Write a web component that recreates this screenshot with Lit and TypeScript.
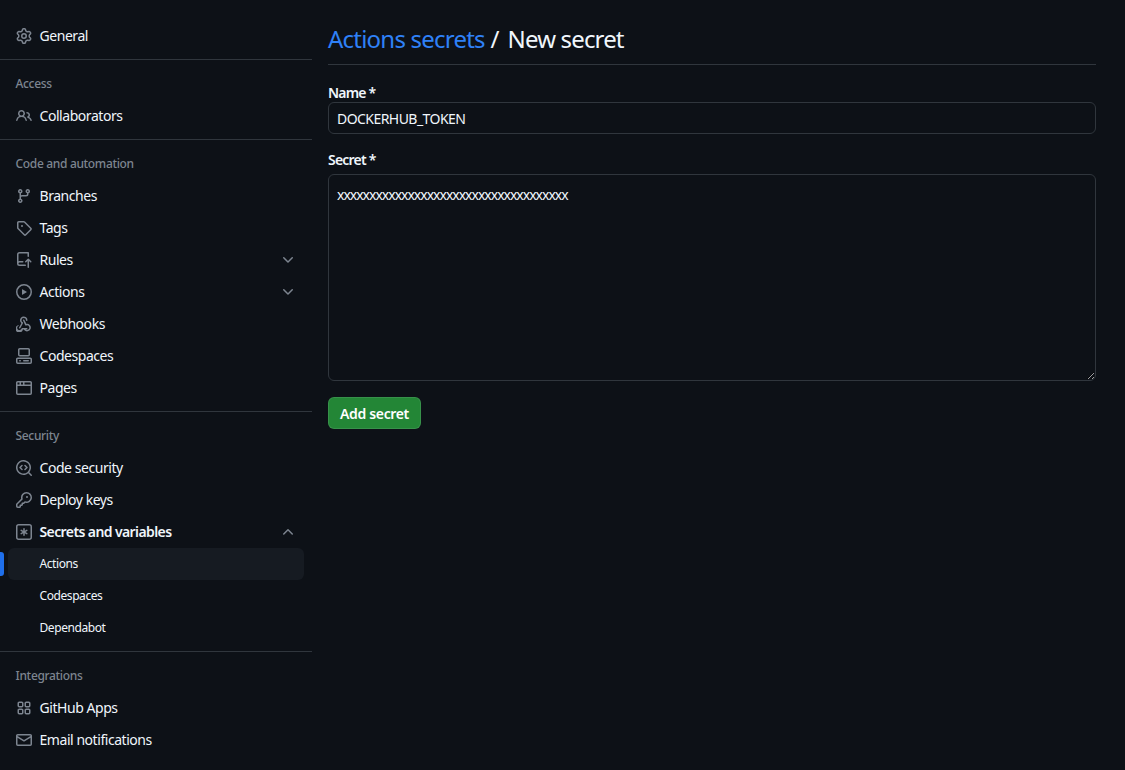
import { LitElement, html, css, svg } from "lit";
import { customElement } from "lit/decorators.js";

const I: Record<string, string> = {
  gear: "M8 0a8.2 8.2 0 0 1 .701.031C9.444.095 9.99.645 10.16 1.29l.288 1.107c.018.066.079.158.212.224.231.114.454.243.668.386.123.082.233.09.299.071l1.103-.303c.644-.176 1.392.021 1.82.63.27.385.506.792.704 1.218.315.675.111 1.422-.364 1.891l-.814.806c-.049.048-.098.147-.088.294.016.257.016.515 0 .772-.01.147.038.246.088.294l.814.806c.475.469.679 1.216.364 1.891a7.977 7.977 0 0 1-.704 1.217c-.428.61-1.176.807-1.82.63l-1.102-.302c-.067-.019-.177-.011-.3.071a5.909 5.909 0 0 1-.668.386c-.133.066-.194.158-.211.224l-.29 1.106c-.168.646-.715 1.196-1.458 1.26a8.006 8.006 0 0 1-1.402 0c-.743-.064-1.289-.614-1.458-1.26l-.289-1.106c-.018-.066-.079-.158-.212-.224a5.738 5.738 0 0 1-.668-.386c-.123-.082-.233-.09-.299-.071l-1.103.303c-.644.176-1.392-.021-1.82-.63a8.12 8.12 0 0 1-.704-1.218c-.315-.675-.111-1.422.363-1.891l.815-.806c.05-.048.098-.147.088-.294a6.214 6.214 0 0 1 0-.772c.01-.147-.038-.246-.088-.294l-.815-.806C.635 6.045.431 5.298.746 4.623a7.92 7.92 0 0 1 .704-1.217c.428-.61 1.176-.807 1.82-.63l1.102.302c.067.019.177.011.3-.071.214-.143.437-.272.668-.386.133-.066.194-.158.211-.224l.29-1.106C6.009.645 6.556.095 7.299.03 7.53.01 7.764 0 8 0Zm-.571 1.525c-.036.003-.108.036-.137.146l-.289 1.105c-.147.561-.549.967-.998 1.189-.173.086-.34.183-.5.29-.417.278-.97.423-1.529.27l-1.103-.303c-.109-.03-.175.016-.195.045-.22.312-.412.644-.573.99-.014.031-.021.11.059.19l.815.806c.411.406.562.957.53 1.456a4.709 4.709 0 0 0 0 .582c.032.499-.119 1.05-.53 1.456l-.815.806c-.081.08-.073.159-.059.19.162.346.353.677.573.989.02.03.085.076.195.046l1.102-.303c.56-.153 1.113-.008 1.53.27.161.107.328.204.501.29.447.222.85.629.997 1.189l.289 1.105c.029.109.101.143.137.146a6.6 6.6 0 0 0 1.142 0c.036-.003.108-.036.137-.146l.289-1.105c.147-.561.549-.967.998-1.189.173-.086.34-.183.5-.29.417-.278.97-.423 1.529-.27l1.103.303c.109.029.175-.016.195-.045.22-.313.411-.644.573-.99.014-.031.021-.11-.059-.19l-.815-.806c-.411-.406-.562-.957-.53-1.456a4.709 4.709 0 0 0 0-.582c-.032-.499.119-1.05.53-1.456l.815-.806c.081-.08.073-.159.059-.19a6.464 6.464 0 0 0-.573-.989c-.02-.03-.085-.076-.195-.046l-1.102.303c-.56.153-1.113.008-1.53-.27a4.44 4.44 0 0 0-.501-.29c-.447-.222-.85-.629-.997-1.189l-.289-1.105c-.029-.11-.101-.143-.137-.146a6.6 6.6 0 0 0-1.142 0ZM11 8a3 3 0 1 1-6 0 3 3 0 0 1 6 0ZM9.5 8a1.5 1.5 0 1 0-3.001.001A1.5 1.5 0 0 0 9.5 8Z",
  people: "M2 5.5a3.5 3.5 0 1 1 5.898 2.549 5.508 5.508 0 0 1 3.034 4.084.75.75 0 1 1-1.482.235 4 4 0 0 0-7.9 0 .75.75 0 0 1-1.482-.236A5.507 5.507 0 0 1 3.102 8.05 3.493 3.493 0 0 1 2 5.5ZM11 4a3.001 3.001 0 0 1 2.22 5.018 5.01 5.01 0 0 1 2.56 3.012.749.749 0 0 1-.885.954.752.752 0 0 1-.549-.514 3.507 3.507 0 0 0-2.522-2.372.75.75 0 0 1-.574-.73v-.352a.75.75 0 0 1 .416-.672A1.5 1.5 0 0 0 11 5.5.75.75 0 0 1 11 4Zm-5.5-.5a2 2 0 1 0-.001 3.999A2 2 0 0 0 5.5 3.5Z",
  branch: "M9.5 3.25a2.25 2.25 0 1 1 3 2.122V6A2.5 2.5 0 0 1 10 8.5H6a1 1 0 0 0-1 1v1.128a2.251 2.251 0 1 1-1.5 0V5.372a2.25 2.25 0 1 1 1.5 0v1.836A2.493 2.493 0 0 1 6 7h4a1 1 0 0 0 1-1v-.628A2.25 2.25 0 0 1 9.5 3.25Zm-6 0a.75.75 0 1 0 1.5 0 .75.75 0 0 0-1.5 0Zm8.25-.75a.75.75 0 1 0 0 1.5.75.75 0 0 0 0-1.5ZM4.25 12a.75.75 0 1 0 0 1.5.75.75 0 0 0 0-1.5Z",
  tag: "M1 7.775V2.75C1 1.784 1.784 1 2.75 1h5.025c.464 0 .91.184 1.238.513l6.25 6.25a1.75 1.75 0 0 1 0 2.474l-5.026 5.026a1.75 1.75 0 0 1-2.474 0l-6.25-6.25A1.752 1.752 0 0 1 1 7.775Zm1.5 0c0 .066.026.13.073.177l6.25 6.25a.25.25 0 0 0 .354 0l5.025-5.025a.25.25 0 0 0 0-.354l-6.25-6.25a.25.25 0 0 0-.177-.073H2.75a.25.25 0 0 0-.25.25ZM6 5a1 1 0 1 1 0 2 1 1 0 0 1 0-2Z",
  rules: "M1 2.5A2.5 2.5 0 0 1 3.5 0h8.75a.75.75 0 0 1 .75.75v3.5a.75.75 0 0 1-1.5 0V1.5h-8a1 1 0 0 0-1 1v6.708A2.493 2.493 0 0 1 3.5 9h3.25a.75.75 0 0 1 0 1.5H3.5a1 1 0 0 0 0 2h5.75a.75.75 0 0 1 0 1.5H3.5A2.5 2.5 0 0 1 1 11.5Zm13.23 7.79h-.001l-1.224-1.224v6.184a.75.75 0 0 1-1.5 0V9.066L10.28 10.29a.75.75 0 0 1-1.06-1.061l2.505-2.504a.75.75 0 0 1 1.06 0L15.29 9.23a.751.751 0 0 1-.018 1.042.751.751 0 0 1-1.042.018Z",
  play: "M8 0a8 8 0 1 1 0 16A8 8 0 0 1 8 0ZM1.5 8a6.5 6.5 0 1 0 13 0 6.5 6.5 0 0 0-13 0Zm4.879-2.773 4.264 2.559a.25.25 0 0 1 0 .428l-4.264 2.559A.25.25 0 0 1 6 10.559V5.442a.25.25 0 0 1 .379-.215Z",
  webhook: "M5.5 4.25a2.25 2.25 0 0 1 4.5 0 .75.75 0 0 0 1.5 0 3.75 3.75 0 1 0-6.14 2.889l-2.272 4.258a.75.75 0 0 0 1.324.706L7 7.25a.75.75 0 0 0-.309-1.015A2.25 2.25 0 0 1 5.5 4.25Z M7.364 3.607a.75.75 0 0 1 1.012.317l2.132 3.996a3.75 3.75 0 1 1-2.352 6.079.75.75 0 0 1 1.13-.987 2.25 2.25 0 1 0 .862-3.495.75.75 0 0 1-.966-.33L7.05 4.62a.75.75 0 0 1 .314-1.013Z M2.9 8.853a.75.75 0 0 1-.45.961A2.25 2.25 0 1 0 5.5 12.75a.75.75 0 0 1 .75-.75h4.5a.75.75 0 0 1 0 1.5H6.922a3.75 3.75 0 1 1-4.983-4.197.75.75 0 0 1 .96.55Z",
  codespaces: "M0 11.25c0-.966.784-1.75 1.75-1.75h12.5c.966 0 1.75.784 1.75 1.75v3A1.75 1.75 0 0 1 14.25 16H1.75A1.75 1.75 0 0 1 0 14.25Zm2-9.5C2 .784 2.784 0 3.75 0h8.5C13.216 0 14 .784 14 1.75v5a1.75 1.75 0 0 1-1.75 1.75h-8.5A1.75 1.75 0 0 1 2 6.75Zm1.75-.25a.25.25 0 0 0-.25.25v5c0 .138.112.25.25.25h8.5a.25.25 0 0 0 .25-.25v-5a.25.25 0 0 0-.25-.25Zm-2 9.5a.25.25 0 0 0-.25.25v3c0 .138.112.25.25.25h12.5a.25.25 0 0 0 .25-.25v-3a.25.25 0 0 0-.25-.25Z M7 12.75a.75.75 0 0 1 .75-.75h4.5a.75.75 0 0 1 0 1.5h-4.5a.75.75 0 0 1-.75-.75Zm-4 0a.75.75 0 0 1 .75-.75h.5a.75.75 0 0 1 0 1.5h-.5a.75.75 0 0 1-.75-.75Z",
  browser: "M0 2.75C0 1.784.784 1 1.75 1h12.5c.966 0 1.75.784 1.75 1.75v10.5A1.75 1.75 0 0 1 14.25 15H1.75A1.75 1.75 0 0 1 0 13.25ZM14.5 6h-13v7.25c0 .138.112.25.25.25h12.5a.25.25 0 0 0 .25-.25Zm-6-3.5v2h6v-1.75a.25.25 0 0 0-.25-.25ZM5 2.5v2h2v-2Zm-3.25 0a.25.25 0 0 0-.25.25V4.5h2v-2Z",
  codescan: "M8.47 4.97a.75.75 0 0 0 0 1.06L9.94 7.5 8.47 8.97a.75.75 0 1 0 1.06 1.06l2-2a.75.75 0 0 0 0-1.06l-2-2a.75.75 0 0 0-1.06 0ZM6.53 6.03a.75.75 0 0 0-1.06-1.06l-2 2a.75.75 0 0 0 0 1.06l2 2a.75.75 0 1 0 1.06-1.06L5.06 7.5l1.47-1.47Z M12.246 13.307a7.501 7.501 0 1 1 1.06-1.06l2.474 2.473a.749.749 0 0 1-.326 1.275.749.749 0 0 1-.734-.215ZM1.5 7.5a6.002 6.002 0 0 0 3.608 5.504 6.002 6.002 0 0 0 6.486-1.117.748.748 0 0 1 .292-.293A6 6 0 1 0 1.5 7.5Z",
  key: "M10.5 0a5.499 5.499 0 1 1-1.288 10.848l-.932.932a.749.749 0 0 1-.53.22H7v.75a.749.749 0 0 1-.22.53l-.5.5a.749.749 0 0 1-.53.22H5v.75a.749.749 0 0 1-.22.53l-.5.5a.749.749 0 0 1-.53.22h-2A1.75 1.75 0 0 1 0 14.25v-2c0-.199.079-.389.22-.53l4.932-4.932A5.5 5.5 0 0 1 10.5 0Zm-4 5.5c-.001.431.069.86.205 1.269a.75.75 0 0 1-.181.768L1.5 12.56v1.69c0 .138.112.25.25.25h1.69l.06-.06v-1.19a.75.75 0 0 1 .75-.75h1.19l.06-.06v-1.19a.75.75 0 0 1 .75-.75h1.19l1.023-1.025a.75.75 0 0 1 .768-.18A4 4 0 1 0 6.5 5.5ZM11 6a1 1 0 1 1 0-2 1 1 0 0 1 0 2Z",
  asterisk: "M0 2.75A2.75 2.75 0 0 1 2.75 0h10.5A2.75 2.75 0 0 1 16 2.75v10.5A2.75 2.75 0 0 1 13.25 16H2.75A2.75 2.75 0 0 1 0 13.25ZM2.75 1.5c-.69 0-1.25.56-1.25 1.25v10.5c0 .69.56 1.25 1.25 1.25h10.5c.69 0 1.25-.56 1.25-1.25V2.75c0-.69-.56-1.25-1.25-1.25Z M8 4a.75.75 0 0 1 .75.75V6.7l1.69-.975a.75.75 0 0 1 .75 1.3L9.5 8l1.69.975a.75.75 0 0 1-.75 1.3L8.75 9.3v1.95a.75.75 0 0 1-1.5 0V9.3l-1.69.975a.75.75 0 0 1-.75-1.3L6.5 8l-1.69-.975a.75.75 0 0 1 .75-1.3l1.69.975V4.75A.75.75 0 0 1 8 4Z",
  apps: "M1.5 3.25c0-.966.784-1.75 1.75-1.75h2.5c.966 0 1.75.784 1.75 1.75v2.5A1.75 1.75 0 0 1 5.75 7.5h-2.5A1.75 1.75 0 0 1 1.5 5.75Zm7 0c0-.966.784-1.75 1.75-1.75h2.5c.966 0 1.75.784 1.75 1.75v2.5a1.75 1.75 0 0 1-1.75 1.75h-2.5A1.75 1.75 0 0 1 8.5 5.75Zm-7 7c0-.966.784-1.75 1.75-1.75h2.5c.966 0 1.75.784 1.75 1.75v2.5a1.75 1.75 0 0 1-1.75 1.75h-2.5a1.75 1.75 0 0 1-1.75-1.75Zm7 0c0-.966.784-1.75 1.75-1.75h2.5c.966 0 1.75.784 1.75 1.75v2.5a1.75 1.75 0 0 1-1.75 1.75h-2.5a1.75 1.75 0 0 1-1.75-1.75ZM3.25 3a.25.25 0 0 0-.25.25v2.5c0 .138.112.25.25.25h2.5A.25.25 0 0 0 6 5.75v-2.5A.25.25 0 0 0 5.75 3Zm7 0a.25.25 0 0 0-.25.25v2.5c0 .138.112.25.25.25h2.5a.25.25 0 0 0 .25-.25v-2.5a.25.25 0 0 0-.25-.25Zm-7 7a.25.25 0 0 0-.25.25v2.5c0 .138.112.25.25.25h2.5a.25.25 0 0 0 .25-.25v-2.5a.25.25 0 0 0-.25-.25Zm7 0a.25.25 0 0 0-.25.25v2.5c0 .138.112.25.25.25h2.5a.25.25 0 0 0 .25-.25v-2.5a.25.25 0 0 0-.25-.25Z",
  mail: "M1.75 2h12.5c.966 0 1.75.784 1.75 1.75v8.5A1.75 1.75 0 0 1 14.25 14H1.75A1.75 1.75 0 0 1 0 12.25v-8.5C0 2.784.784 2 1.75 2ZM1.5 12.251c0 .138.112.25.25.25h12.5a.25.25 0 0 0 .25-.25V5.809L8.38 9.397a.75.75 0 0 1-.76 0L1.5 5.809v6.442Zm13-8.181v-.32a.25.25 0 0 0-.25-.25H1.75a.25.25 0 0 0-.25.25v.32L8 7.88Z",
  down: "M12.78 5.22a.749.749 0 0 1 0 1.06l-4.25 4.25a.749.749 0 0 1-1.06 0L3.22 6.28a.749.749 0 1 1 1.06-1.06L8 8.939l3.72-3.719a.749.749 0 0 1 1.06 0Z",
  up: "M3.22 10.53a.749.749 0 0 1 0-1.06l4.25-4.25a.749.749 0 0 1 1.06 0l4.25 4.25a.749.749 0 1 1-1.06 1.06L8 6.811 4.28 10.53a.749.749 0 0 1-1.06 0Z",
};

const icon = (n: string, cls = "ic") =>
  html`<svg class=${cls} viewBox="0 0 16 16" width="16" height="16" aria-hidden="true">${svg`<path fill="currentColor" d=${I[n]}></path>`}</svg>`;

type Row = { t: string; i?: string; c?: string; strong?: boolean; sub?: boolean; cur?: boolean };
type Group = { label?: string; rows: Row[] };

const groups: Group[] = [
  { rows: [{ t: "General", i: "gear" }] },
  { label: "Access", rows: [{ t: "Collaborators", i: "people" }] },
  {
    label: "Code and automation",
    rows: [
      { t: "Branches", i: "branch" },
      { t: "Tags", i: "tag" },
      { t: "Rules", i: "rules", c: "down" },
      { t: "Actions", i: "play", c: "down" },
      { t: "Webhooks", i: "webhook" },
      { t: "Codespaces", i: "codespaces" },
      { t: "Pages", i: "browser" },
    ],
  },
  {
    label: "Security",
    rows: [
      { t: "Code security", i: "codescan" },
      { t: "Deploy keys", i: "key" },
      { t: "Secrets and variables", i: "asterisk", c: "up", strong: true },
      { t: "Actions", sub: true, cur: true },
      { t: "Codespaces", sub: true },
      { t: "Dependabot", sub: true },
    ],
  },
  {
    label: "Integrations",
    rows: [
      { t: "GitHub Apps", i: "apps" },
      { t: "Email notifications", i: "mail" },
    ],
  },
];

@customElement("app-root")
export class AppRoot extends LitElement {
  static styles = css`
    :host {
      display: block;
      height: 770px;
      overflow: hidden;
      background: #0d1117;
      color: #f0f6fc;
      font-family: "Noto Sans", "Open Sans", sans-serif;
      font-size: 14px;
      letter-spacing: -0.45px;
    }
    .page { display: flex; align-items: flex-start; }
    .side { width: 312px; flex: none; padding-top: 20px; }
    .group { padding-bottom: 7px; border-bottom: 1px solid #30363d; }
    .group:last-child { border-bottom: 0; }
    .group-label {
      height: 30px; padding-bottom: 2px; margin: 8px 0 0 15.5px;
      display: flex; align-items: center;
      font-size: 12px; font-weight: 500; color: #7d8590; letter-spacing: -0.33px;
    }
    .row {
      position: relative; height: 32px; margin: 0 8px;
      display: flex; align-items: center; border-radius: 6px;
    }
    .ic { flex: none; color: #7d8590; margin: 0 7.5px 0 8px; }
    .row-text { flex: 1; padding-bottom: 2px; }
    .strong { font-weight: 600; letter-spacing: -0.6px; }
    .sub { font-size: 12px; padding-left: 31.5px; letter-spacing: -0.42px; }
    .cur { background: #161b22; }
    .cur::before {
      content: ""; position: absolute; left: -8px; top: 4px;
      width: 4px; height: 24px; border-radius: 0 3px 3px 0; background: #1f6feb;
    }
    .chev { flex: none; color: #7d8590; margin-right: 8px; }
    .main { width: 768px; margin-left: 16px; flex: none; }
    h1 {
      margin: 0; padding: 20px 0 7px; height: 37px;
      font-size: 24px; line-height: 37px; font-weight: 400; letter-spacing: -0.55px;
      border-bottom: 1px solid #30363d; box-sizing: content-box;
    }
    h1 a { color: #2f81f7; text-decoration: none; letter-spacing: -0.78px; }
    .crumb { margin-left: 3px; letter-spacing: -0.85px; }
    label {
      display: block; font-weight: 600; height: 20px; line-height: 22px; letter-spacing: -0.8px;
    }
    .l1 { margin-top: 17px; }
    .l2 { margin-top: 15px; margin-bottom: 5px; }
    input, textarea {
      display: block; width: 100%; box-sizing: border-box; margin: 0;
      background: #0d1117; color: #f0f6fc;
      border: 1px solid #30363d; border-radius: 6px;
      font: inherit; letter-spacing: -0.55px; outline: none;
      padding: 5px 8px; line-height: 20px;
    }
    input { height: 32px; }
    textarea { height: 207px; padding-top: 10px; color-scheme: dark; resize: vertical; letter-spacing: -1px; }
    button {
      display: block; margin-top: 16px; height: 32px; width: 93px; padding: 0;
      background: #238636; color: #fff; border: 1px solid rgba(240,246,252,.1); border-radius: 6px;
      font: inherit; font-weight: 600; letter-spacing: -0.35px;
    }
  `;

  private row(r: Row) {
    return html`<div class="row ${r.sub ? "sub" : ""} ${r.cur ? "cur" : ""}">
      ${r.i ? icon(r.i) : ""}
      <span class="row-text ${r.strong ? "strong" : ""}">${r.t}</span>
      ${r.c ? icon(r.c, "chev") : ""}
    </div>`;
  }

  render() {
    return html`<div class="page">
      <nav class="side">
        ${groups.map(
          (g) => html`<div class="group">
            ${g.label ? html`<div class="group-label">${g.label}</div>` : ""}
            ${g.rows.map((r) => this.row(r))}
          </div>`
        )}
      </nav>
      <main class="main">
        <h1><a href="#">Actions secrets</a> / <span class="crumb">New secret</span></h1>
        <label class="l1">Name *</label>
        <input type="text" .value=${"DOCKERHUB_TOKEN"} />
        <label class="l2">Secret *</label>
        <textarea .value=${"x".repeat(36)}></textarea>
        <button type="button">Add secret</button>
      </main>
    </div>`;
  }
}
